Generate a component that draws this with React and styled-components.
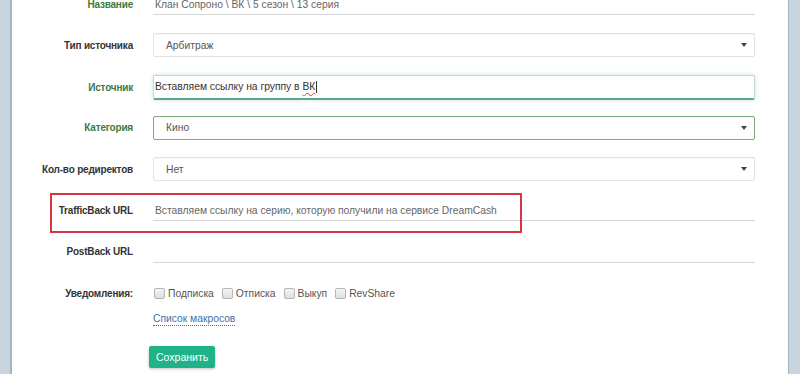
import React from "react";
import styled, { createGlobalStyle, css } from "styled-components";

const GlobalStyle = createGlobalStyle`
  html, body {
    margin: 0;
    padding: 0;
    background: #fff;
    overflow: hidden;
  }
  body {
    font-family: "Liberation Sans", Arial, sans-serif;
  }
`;

const Page = styled.div`
  display: flex;
  width: 800px;
  height: 374px;
  overflow: hidden;
`;

const SideStrip = styled.div`
  width: 10px;
  flex: none;
  background: #c8d4df;
  ${(p) =>
    p.left
      ? css`border-right: 2px solid #a9b3bd;`
      : css`border-left: 1px solid #a9b3bd; width: 11px;`}
`;

const Main = styled.div`
  flex: 1;
  background: #fff;
`;

const Form = styled.div`
  display: flex;
  flex-direction: column;
  gap: 17.3px;
  margin-top: -8px;
`;

const Row = styled.div`
  position: relative;
  display: grid;
  grid-template-columns: 121px 602px;
  column-gap: 20px;
  align-items: center;
  height: 24px;
`;

const Label = styled.div`
  text-align: right;
  font-size: 10px;
  letter-spacing: -0.2px;
  font-weight: bold;
  color: ${(p) => (p.ok ? "#3d7a3e" : "#333")};
`;

const Underlined = styled.div`
  height: 22px;
  box-sizing: border-box;
  border-bottom: 1px solid #d6d6d6;
  padding: 1px 2px 0;
  display: flex;
  align-items: center;
  font-size: 10.3px;
  color: #666;
`;

const Select = styled.div`
  height: 24px;
  box-sizing: border-box;
  border: 1px solid ${(p) => (p.ok ? "#7fa97f" : "#e3e3e3")};
  border-radius: 2px;
  box-shadow: inset 0 1px 1px rgba(0, 0, 0, 0.04);
  padding: 0 7px 0 12px;
  display: flex;
  align-items: center;
  justify-content: space-between;
  font-size: 10.3px;
  color: #555;
`;

const Caret = styled.span`
  width: 0;
  height: 0;
  border-left: 3px solid transparent;
  border-right: 3px solid transparent;
  border-top: 4px solid #444;
`;

const FocusInput = styled.div`
  height: 25px;
  box-sizing: border-box;
  border: 1px solid #b9e0c7;
  border-bottom: 2px solid #5aa98a;
  border-radius: 2px;
  box-shadow: 0 0 4px rgba(90, 180, 130, 0.35);
  padding: 0 1px;
  display: flex;
  align-items: center;
  font-size: 10.3px;
  color: #333;
`;

const Misspelled = styled.span`
  text-decoration: underline wavy #e0393e;
  text-decoration-thickness: 1px;
  text-underline-offset: 2px;
`;

const Cursor = styled.span`
  display: inline-block;
  width: 1px;
  height: 12px;
  background: #333;
  margin-left: 1px;
`;

const Highlight = styled.div`
  position: absolute;
  left: 38px;
  top: -5px;
  width: 472px;
  height: 40px;
  box-sizing: border-box;
  border: 2px solid #d6343f;
  pointer-events: none;
`;

const Checks = styled.div`
  display: flex;
  align-items: center;
  gap: 8px;
  padding-left: 1px;
`;

const Check = styled.label`
  display: flex;
  align-items: center;
  gap: 3px;
  font-size: 10.3px;
  color: #555;
`;

const Box = styled.span`
  width: 9px;
  height: 9px;
  border: 1px solid #b5b5b5;
  border-radius: 2px;
  background: linear-gradient(#f4f4f4, #dedede);
`;

const Extra = styled.div`
  margin-left: 141px;
  display: flex;
  flex-direction: column;
  align-items: flex-start;
`;

const MacroLink = styled.a`
  margin-top: 7px;
  font-size: 10.3px;
  color: #3f6fa8;
  text-decoration: none;
  border-bottom: 1px dotted #3f6fa8;
  line-height: 13px;
`;

const SaveButton = styled.button`
  margin-top: 20px;
  margin-left: -4px;
  height: 22px;
  padding: 0 7px;
  border: none;
  border-radius: 2px;
  background: #21b388;
  color: #fff;
  font-family: inherit;
  font-size: 10.5px;
  box-shadow: 0 1px 3px rgba(0, 0, 0, 0.25);
`;

function App() {
  return (
    <>
      <GlobalStyle />
      <Page>
        <SideStrip left />
        <Main>
          <Form>
            <Row>
              <Label ok>Название</Label>
              <Underlined>Клан Сопроно \ ВК \ 5 сезон \ 13 серия</Underlined>
            </Row>
            <Row>
              <Label>Тип источника</Label>
              <Select>
                Арбитраж <Caret />
              </Select>
            </Row>
            <Row>
              <Label ok>Источник</Label>
              <FocusInput>
                Вставляем ссылку на группу в&nbsp;<Misspelled>ВК</Misspelled>
                <Cursor />
              </FocusInput>
            </Row>
            <Row>
              <Label ok>Категория</Label>
              <Select ok>
                Кино <Caret />
              </Select>
            </Row>
            <Row>
              <Label>Кол-во редиректов</Label>
              <Select>
                Нет <Caret />
              </Select>
            </Row>
            <Row>
              <Highlight />
              <Label>TrafficBack URL</Label>
              <Underlined>
                Вставляем ссылку на серию, которую получили на сервисе DreamCash
              </Underlined>
            </Row>
            <Row>
              <Label>PostBack URL</Label>
              <Underlined />
            </Row>
            <Row>
              <Label>Уведомления:</Label>
              <Checks>
                {["Подписка", "Отписка", "Выкуп", "RevShare"].map((t) => (
                  <Check key={t}>
                    <Box />
                    {t}
                  </Check>
                ))}
              </Checks>
            </Row>
          </Form>
          <Extra>
            <MacroLink href="#">Список макросов</MacroLink>
            <SaveButton>Сохранить</SaveButton>
          </Extra>
        </Main>
        <SideStrip />
      </Page>
    </>
  );
}

export default App;
